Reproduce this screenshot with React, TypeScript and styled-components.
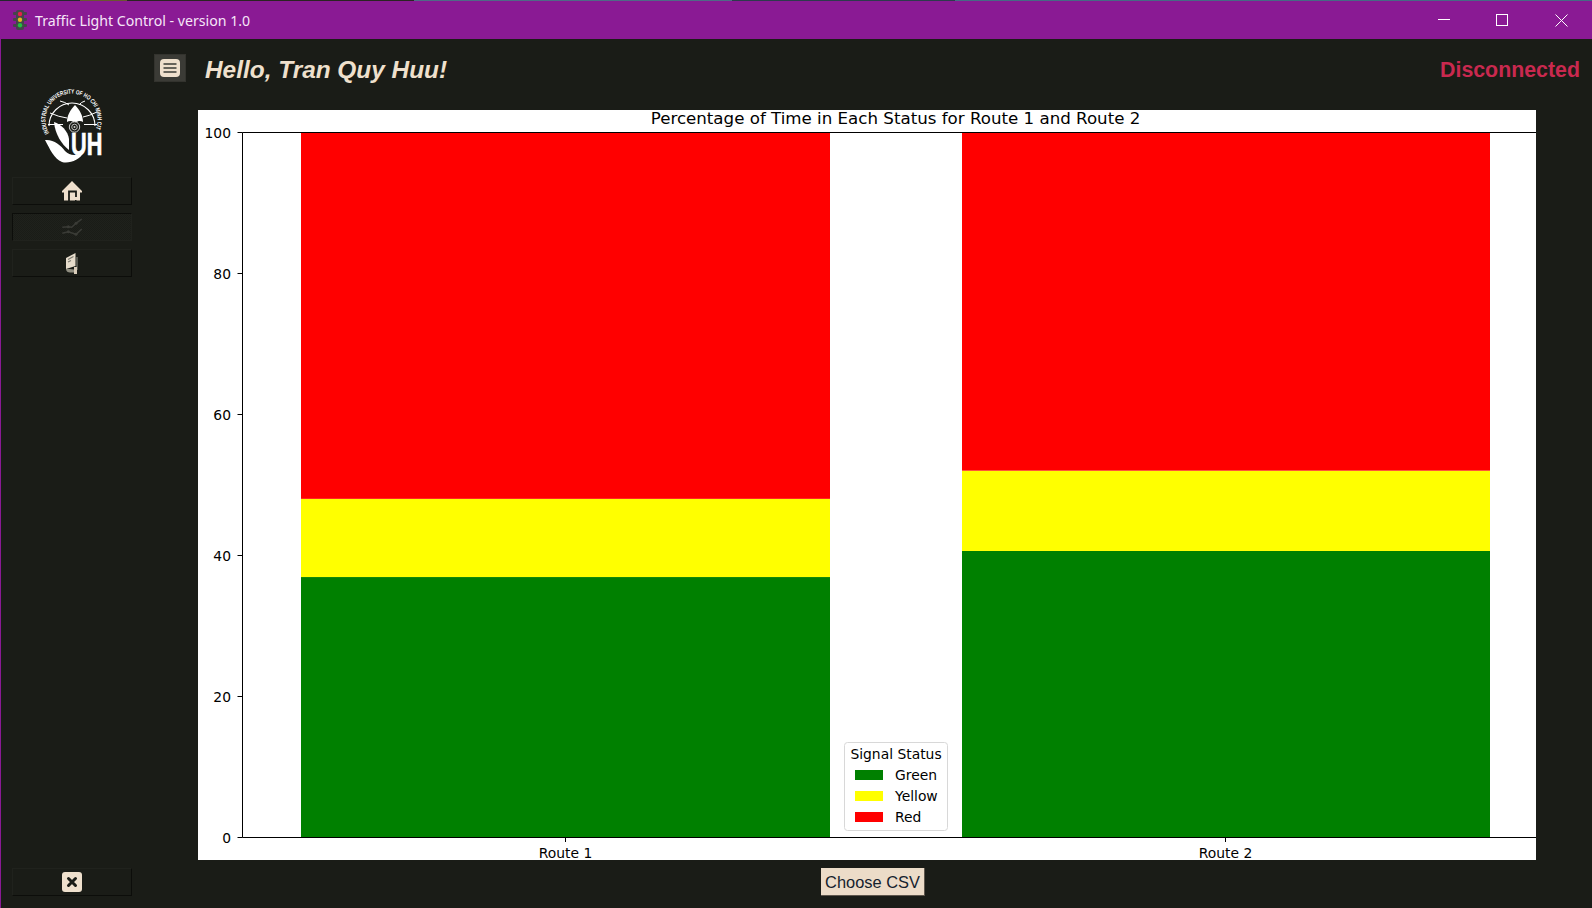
import React from "react";
import styled, { createGlobalStyle } from "styled-components";

const Global = createGlobalStyle`
  html, body { margin: 0; padding: 0; height: 100%; overflow: hidden; background: #1a1c17; }
  #root { height: 100%; }
`;

const Frame = styled.div`
  width: 1592px;
  height: 908px;
  display: flex;
  flex-direction: column;
  overflow: hidden;
  background: #1a1c17;
  box-sizing: border-box;
`;

const DesktopSliver = styled.div`
  height: 1px;
  flex: none;
  background: linear-gradient(90deg, #23262c 0 5%, #6a5630 5% 8%, #2a2422 8% 26%, #4f6a86 26% 46%, #2d3a4c 46% 60%, #466a84 60% 100%);
`;

const TitleBar = styled.header`
  height: 38px;
  flex: none;
  display: flex;
  align-items: center;
  background: #8a1a94;
  color: #f6e6f8;
  padding-left: 13px;
  font-family: "Noto Sans", "Open Sans", sans-serif;
  font-size: 14.15px;
`;

const TitleText = styled.span`
  margin-left: 8px;
  flex: 1;
`;

const WindowButton = styled.div<{ $wide?: boolean }>`
  width: ${(p) => (p.$wide ? "61px" : "58px")};
  height: 38px;
  display: flex;
  align-items: center;
  justify-content: center;
`;

const Body = styled.div`
  flex: 1;
  min-height: 0;
  display: flex;
  border-left: 1px solid #8a1a94;
`;

const Sidebar = styled.aside`
  width: 153px;
  flex: none;
  display: flex;
  flex-direction: column;
  align-items: flex-start;
  padding: 48px 0 12px 11px;
  box-sizing: border-box;
`;

const LogoBox = styled.div`
  width: 120px;
  height: 90px;
  display: flex;
  justify-content: center;
`;

const NavButton = styled.button<{ $active?: boolean; $last?: boolean }>`
  width: 120px;
  height: 28px;
  margin-bottom: ${(p) => (p.$last ? "0" : "8px")};
  padding: 0;
  display: flex;
  align-items: center;
  justify-content: center;
  box-sizing: border-box;
  background: ${(p) =>
    p.$active
      ? "repeating-conic-gradient(#1a1c17 0 25%, #1f211c 0 50%) 0 0 / 2px 2px"
      : "#1a1c17"};
  border-style: solid;
  border-width: 1px;
  border-color: ${(p) =>
    p.$active ? "#0c0d0a #20221d #20221d #0c0d0a" : "#20221d #0c0d0a #0c0d0a #20221d"};
`;

const Spacer = styled.div`
  flex: 1;
`;

const Main = styled.main`
  flex: 1;
  min-width: 0;
  display: flex;
  flex-direction: column;
`;

const Header = styled.div`
  height: 71px;
  flex: none;
  display: flex;
  align-items: flex-start;
  padding-top: 15px;
  box-sizing: border-box;
`;

const MenuButton = styled.button`
  width: 32px;
  height: 28px;
  padding: 0;
  flex: none;
  display: flex;
  align-items: center;
  justify-content: center;
  background: #3b3b36;
  border: 1px solid #33332e;
`;

const Greeting = styled.h1`
  margin: 1px 0 0 19px;
  flex: 1;
  font: italic bold 24.4px/29px "Liberation Sans", Arial, sans-serif;
  color: #efe0cd;
`;

const Status = styled.div`
  margin: 2px 12px 0 0;
  font: bold 21.35px/29px "Liberation Sans", Arial, sans-serif;
  color: #c9294f;
`;

const ChartPanel = styled.section`
  width: 1338px;
  height: 750px;
  margin-left: 44px;
  flex: none;
  background: #fff;
`;

const ChartSvg = styled.svg`
  display: block;
  font-family: "DejaVu Sans", sans-serif;
  font-size: 13.89px;
  fill: #000;
`;

const Footer = styled.div`
  flex: 1;
  display: flex;
  justify-content: flex-start;
  padding: 8px 0 0 667px;
`;

const CsvButton = styled.button`
  width: 104px;
  height: 28px;
  padding: 1px 0 0;
  box-sizing: border-box;
  white-space: nowrap;
  background: #ecdcc8;
  color: #15222e;
  border: none;
  border-right: 1px solid #5e564c;
  border-bottom: 1px solid #5e564c;
  font: 16.4px "Liberation Sans", Arial, sans-serif;
`;

const TrafficIcon = () => (
  <svg width="14" height="20" viewBox="0 0 14 20">
    <rect x="3" y="0" width="8" height="20" rx="2" fill="#45464a" />
    <rect x="0" y="2" width="14" height="3" rx="1" fill="#45464a" />
    <rect x="0" y="8" width="14" height="3" rx="1" fill="#45464a" />
    <rect x="0" y="14" width="14" height="3" rx="1" fill="#45464a" />
    <circle cx="7" cy="4" r="2.2" fill="#e6204c" />
    <circle cx="7" cy="9.7" r="2.2" fill="#e8b820" />
    <circle cx="7" cy="15.3" r="2.2" fill="#22c040" />
  </svg>
);

const Logo = () => (
  <svg width="66" height="80" viewBox="0 0 66 80" fill="#fff">
    <defs>
      <path id="ringPath" d="M10.2 46 A26 26 0 1 1 57 41.4" fill="none" />
    </defs>
    <text fontFamily="'Liberation Sans', sans-serif" fontWeight="700" fontSize="6.2">
      <textPath href="#ringPath" textLength="108" lengthAdjust="spacingAndGlyphs">
        INDUSTRIAL UNIVERSITY OF HO CHI MINH CITY
      </textPath>
    </text>
    <path d="M10 39 A23 23 0 0 1 56 39" fill="none" stroke="#fff" strokeWidth="1.1" />
    <path d="M11 26 Q20 30 28 31 M58 25 Q50 29 44 30 M9 37.5 H24 M45 37.5 H58 M21 14 Q26 15 30 18 M46 14 Q42 15 40 18" fill="none" stroke="#fff" strokeWidth="1" />
    <path d="M36 18 C41 23 44 29 44 35 C42 34 40 33 36 36 C32 33 30 34 28 35 C28 29 31 23 36 18 Z" />
    <circle cx="35.5" cy="40" r="5.2" fill="#1a1c17" stroke="#cfcfcf" strokeWidth="1" />
    <circle cx="35.5" cy="40" r="2.8" fill="none" stroke="#cfcfcf" strokeWidth="0.9" />
    <circle cx="35.5" cy="40" r="1" fill="#cfcfcf" />
    <path d="M15 35 C22 37 29 44 30 52 L30 63 C23 58 16 47 15 35 Z" />
    <path d="M6 53 C14 52 22 58 26 64 C31 69 38 69 45 65 C41 73 30 77 23 75 C15 72 11 62 6 53 Z" />
    <text transform="translate(32 68) scale(0.7 1)" fontFamily="'Liberation Sans', sans-serif" fontWeight="700" fontSize="31" stroke="#fff" strokeWidth="0.7">UH</text>
  </svg>
);

const HomeIcon = () => (
  <svg width="20" height="20" viewBox="0 0 20 20">
    <path d="M10 0 L20 10 V11.5 H18 V19.5 H2 V11.5 H0 V10 Z" fill="#efe0cd" />
    <path d="M7 20 V10.5 H14 V16" fill="none" stroke="#1a1c17" strokeWidth="1.8" />
    <path d="M14.5 20 H13" stroke="#1a1c17" strokeWidth="2" />
  </svg>
);

const TrendIcon = () => (
  <svg width="20" height="20" viewBox="0 0 20 20" fill="none" stroke="#3a3b36" strokeWidth="1.5">
    <path d="M0.3 10.3 L6.3 9.7 L9.7 10.3 L14 6.3 L19.7 2" />
    <path d="M0.3 16.3 L6.3 14.7 L14 17.3 L19.7 12" />
    <g fill="#3a3b36" stroke="none">
      <circle cx="6.3" cy="9.7" r="1.5" /><circle cx="14" cy="6.3" r="1.5" /><circle cx="6.3" cy="14.7" r="1.5" /><circle cx="14" cy="17.3" r="1.5" />
    </g>
  </svg>
);

const BookIcon = () => (
  <svg width="14" height="21" viewBox="0 0 14 21">
    <path d="M10.5 0 V13 L1 16 V5 Z" fill="#e6dccb" />
    <path d="M3 6.5 L8.5 3.5 M3 9 L6 7.5" stroke="#7c7a70" strokeWidth="1.2" />
    <rect x="11" y="4" width="2" height="13" fill="#55564e" />
    <path d="M1 16 C1 18.5 3 19.5 5 19.5 H9 V16.5 L5 16 Z" fill="#8f8d80" />
    <rect x="9" y="14" width="3" height="7" fill="#d8ccba" />
  </svg>
);

const CloseSquare = () => (
  <svg width="20" height="20" viewBox="0 0 20 20">
    <rect width="20" height="20" rx="3" fill="#efe0cd" />
    <path d="M6.5 6.5 L13.5 13.5 M13.5 6.5 L6.5 13.5" stroke="#1a1c17" strokeWidth="3" strokeLinecap="round" />
  </svg>
);

const MenuIcon = () => (
  <svg width="20" height="18" viewBox="0 0 20 18">
    <rect width="20" height="18" rx="4" fill="#efe0cd" />
    <path d="M3.5 5 H16.5 M3.5 9 H16.5 M3.5 13 H16.5" stroke="#3b3b36" strokeWidth="1.7" />
  </svg>
);

const yFor = (v: number) => 727 - v * 7.045;

const bars = [
  { x: 103, w: 529, label: "Route 1", cx: 367.5, green: 36.9, yellow: 48 },
  { x: 764, w: 528, label: "Route 2", cx: 1027.5, green: 40.6, yellow: 52 },
];

const Chart = () => (
  <ChartSvg width="1338" height="750" viewBox="0 0 1338 750">
    <text x="697.5" y="14" textAnchor="middle" fontSize="16.67">
      Percentage of Time in Each Status for Route 1 and Route 2
    </text>
    {bars.map((b) => (
      <g key={b.label}>
        <rect x={b.x} y={yFor(b.green)} width={b.w} height={b.green * 7.045} fill="#008000" />
        <rect x={b.x} y={yFor(b.yellow)} width={b.w} height={(b.yellow - b.green) * 7.045} fill="#ffff00" />
        <rect x={b.x} y={yFor(100)} width={b.w} height={(100 - b.yellow) * 7.045} fill="#ff0000" />
        <line x1={b.cx} x2={b.cx} y1="727" y2="732" stroke="#000" />
        <text x={b.cx} y="748" textAnchor="middle">{b.label}</text>
      </g>
    ))}
    <path d="M44.5 22.5 V727.5 H1338 M44.5 22.5 H1338" fill="none" stroke="#000" />
    {[0, 20, 40, 60, 80, 100].map((v) => {
      const y = Math.floor(yFor(v)) + 0.5;
      return (
        <g key={v}>
          <line x1="39.5" x2="44.5" y1={y} y2={y} stroke="#000" />
          <text x="33" y={y + 5} textAnchor="end">{v}</text>
        </g>
      );
    })}
    <rect x="646.5" y="632.5" width="103" height="88" rx="3" fill="#fff" stroke="#d8d8d8" />
    <text x="698" y="649" textAnchor="middle">Signal Status</text>
    <rect x="657" y="660" width="28" height="10" fill="#008000" />
    <rect x="657" y="681" width="28" height="10" fill="#ffff00" />
    <rect x="657" y="702" width="28" height="10" fill="#ff0000" />
    <text x="697" y="670">Green</text>
    <text x="697" y="691">Yellow</text>
    <text x="697" y="712">Red</text>
  </ChartSvg>
);

export default function App() {
  return (
    <Frame>
      <Global />
      <DesktopSliver />
      <TitleBar>
        <TrafficIcon />
        <TitleText>Traffic Light Control - version 1.0</TitleText>
        <WindowButton>
          <svg width="12" height="12" viewBox="0 0 12 12"><path d="M0 5.5 H12" stroke="#fff" /></svg>
        </WindowButton>
        <WindowButton>
          <svg width="12" height="12" viewBox="0 0 12 12"><rect x="0.5" y="0.5" width="11" height="11" fill="none" stroke="#fff" /></svg>
        </WindowButton>
        <WindowButton $wide>
          <svg width="13" height="13" viewBox="0 0 13 13"><path d="M0.5 0.5 L12.5 12.5 M12.5 0.5 L0.5 12.5" stroke="#fff" /></svg>
        </WindowButton>
      </TitleBar>
      <Body>
        <Sidebar>
          <LogoBox><Logo /></LogoBox>
          <NavButton><HomeIcon /></NavButton>
          <NavButton $active><TrendIcon /></NavButton>
          <NavButton><BookIcon /></NavButton>
          <Spacer />
          <NavButton $last><CloseSquare /></NavButton>
        </Sidebar>
        <Main>
          <Header>
            <MenuButton><MenuIcon /></MenuButton>
            <Greeting>Hello, Tran Quy Huu!</Greeting>
            <Status>Disconnected</Status>
          </Header>
          <ChartPanel><Chart /></ChartPanel>
          <Footer><CsvButton>Choose CSV</CsvButton></Footer>
        </Main>
      </Body>
    </Frame>
  );
}
